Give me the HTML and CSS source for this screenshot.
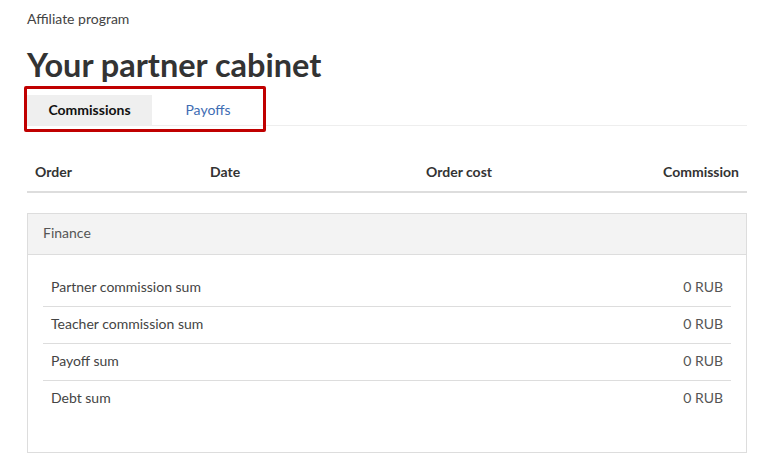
FILE: index.html
```html
<!DOCTYPE html>
<html lang="en">
<head>
<meta charset="utf-8">
<title>Your partner cabinet</title>
<link rel="stylesheet" href="styles.css">
</head>
<body>
<div class="page">
  <div class="breadcrumb">Affiliate program</div>
  <h1 class="title">Your partner cabinet</h1>
  <div class="tabs">
    <div class="tab-group">
      <div class="tab tab-active">Commissions</div>
      <div class="tab tab-link">Payoffs</div>
      <div class="highlight"></div>
    </div>
  </div>
  <div class="table-head">
    <div class="th">Order</div>
    <div class="th">Date</div>
    <div class="th">Order cost</div>
    <div class="th th-right">Commission</div>
  </div>
  <div class="panel">
    <div class="panel-head">Finance</div>
    <div class="panel-body">
      <div class="row"><span class="label">Partner commission sum</span><span class="value">0 RUB</span></div>
      <div class="row"><span class="label">Teacher commission sum</span><span class="value">0 RUB</span></div>
      <div class="row"><span class="label">Payoff sum</span><span class="value">0 RUB</span></div>
      <div class="row"><span class="label">Debt sum</span><span class="value">0 RUB</span></div>
    </div>
  </div>
</div>
</body>
</html>
```

FILE: styles.css
```css
* { box-sizing: border-box; }
html, body { margin: 0; padding: 0; background: #fff; }
body {
  font-family: Lato, "Open Sans", "Liberation Sans", sans-serif;
  color: #333;
  font-size: 14px;
}
.page {
  width: 720px;
  margin: 0 0 0 27px;
  padding-top: 10px;
}
.breadcrumb {
  font-size: 14px;
  line-height: 18px;
  color: #444;
}
.title {
  margin: 18px 0 0 0;
  font-size: 32.5px;
  line-height: 38px;
  font-weight: 700;
  color: #333;
}
.tabs {
  margin-top: 11px;
  border-bottom: 1px solid #eee;
}
.tab-group {
  display: flex;
  position: relative;
  width: max-content;
}
.tab {
  height: 30px;
  line-height: 29px;
  padding-bottom: 1px;
  font-size: 14px;
  text-align: center;
}
.tab-active {
  width: 125px;
  background: #efefef;
  font-weight: 700;
  color: #111;
}
.tab-link {
  width: 112px;
  color: #3d6cb3;
}
.highlight {
  position: absolute;
  left: -3px;
  top: -9px;
  width: 242px;
  height: 46px;
  border: 3px solid #c00000;
  border-radius: 2px;
}
.table-head {
  margin-top: 27px;
  display: grid;
  grid-template-columns: 175px 216px 1fr auto;
  padding: 10px 8px 10px 8px;
  border-bottom: 2px solid #ddd;
}
.th {
  font-weight: 700;
  font-size: 14px;
  line-height: 18px;
  color: #333;
}
.th-right { text-align: right; }
.panel {
  margin-top: 20px;
  border: 1px solid #ddd;
}
.panel-head {
  background: #f3f3f3;
  border-bottom: 1px solid #ddd;
  padding: 10px 15px 12px 15px;
  line-height: 18px;
  font-size: 14px;
  color: #555;
}
.panel-body {
  padding: 15px 15px 35px 15px;
}
.row {
  display: flex;
  justify-content: space-between;
  padding: 8px 8px 10px 8px;
  line-height: 18px;
  border-bottom: 1px solid #ddd;
  font-size: 14px;
}
.row:last-child { border-bottom: none; }
.label { color: #444; }
.value { color: #555; }
```
